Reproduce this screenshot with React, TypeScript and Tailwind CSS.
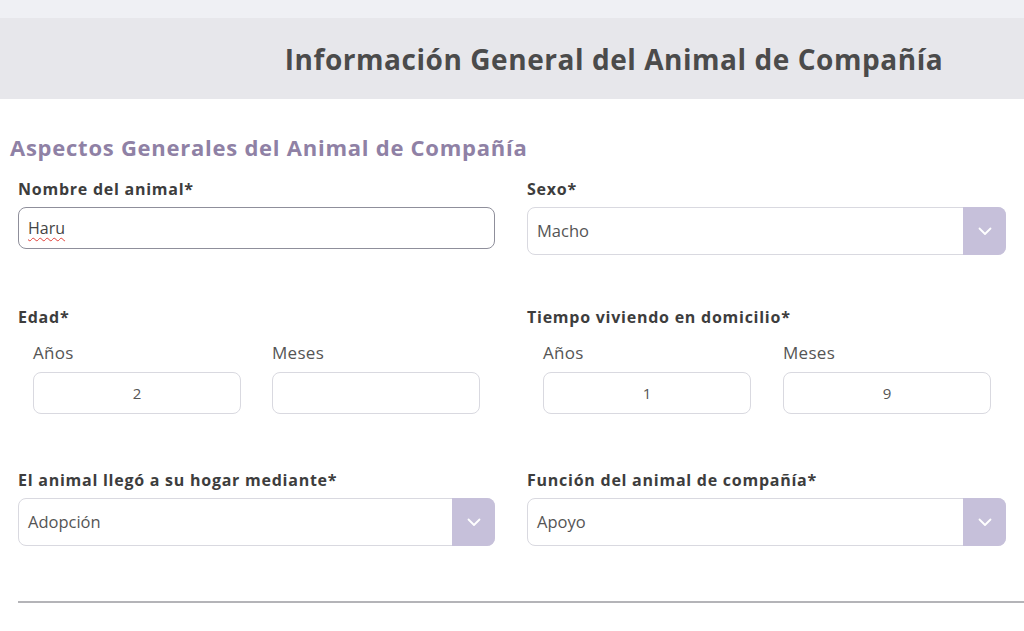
import React from "react";

const Chevron = () => (
  <svg width="14" height="9" viewBox="0 0 14 9" fill="none">
    <path d="M1.5 1.5L7 7L12.5 1.5" stroke="white" strokeWidth="1.8" strokeLinecap="round" strokeLinejoin="round" />
  </svg>
);

const Select = ({ value }: { value: string }) => (
  <div className="flex h-[48px] w-full rounded-[8px] border border-[#d9d9e0] bg-white">
    <div className="flex flex-1 items-center pl-[9px] text-[16.5px] text-[#555] font-['Open_Sans',sans-serif]">{value}</div>
    <div className="-my-px -mr-px flex w-[43px] items-center justify-center rounded-r-[8px] bg-[#c6c0da]">
      <Chevron />
    </div>
  </div>
);

const Label = ({ children }: { children: React.ReactNode }) => (
  <div className="h-[20px] leading-[20px] text-[16px] font-bold text-[#3d3d3d] font-['Open_Sans',sans-serif] tracking-[0.75px]">{children}</div>
);

const NumBox = ({ label, value }: { label: string; value: string }) => (
  <div className="flex w-[208px] flex-col">
    <div className="h-[20px] leading-[20px] text-[17px] text-[#555] font-['Open_Sans',sans-serif] tracking-[0.3px]">{label}</div>
    <div className="mt-[9px] flex h-[42px] items-center justify-center rounded-[8px] border border-[#d9d9e0] bg-white text-[15px] text-[#555] font-['Open_Sans',sans-serif]">
      {value}
    </div>
  </div>
);

export default function App() {
  return (
    <div className="h-[631px] w-[1024px] overflow-hidden bg-white">
      <div className="h-[18px] bg-[#eff0f4]" />
      <div className="flex h-[81px] items-center justify-center bg-[#e7e7eb] pl-[204px]">
        <h1 className="text-[28px] font-bold text-[#4b4b4b] font-['Open_Sans',sans-serif] tracking-[0.55px]">
          Información General del Animal de Compañía
        </h1>
      </div>
      <div className="px-[18px]">
        <h2 className="-ml-[8px] mt-[34px] h-[28px] leading-[28px] text-[22px] font-bold text-[#8f81a5] font-['Open_Sans',sans-serif] tracking-[0.75px]">
          Aspectos Generales del Animal de Compañía
        </h2>
        <div className="mt-[18px] grid grid-cols-[477px_479px] gap-x-[32px] items-start">
          <div className="flex flex-col">
            <Label>Nombre del animal*</Label>
            <div className="mt-[8px] flex h-[42px] items-center rounded-[8px] border border-[#8f8f9b] bg-white pl-[9px] text-[16px] text-[#444] font-['Open_Sans',sans-serif]">
              <span className="underline decoration-wavy decoration-[#e0403a] decoration-1 underline-offset-[3px]">Haru</span>
            </div>
          </div>
          <div className="flex flex-col">
            <Label>Sexo*</Label>
            <div className="mt-[8px]">
              <Select value="Macho" />
            </div>
          </div>

          <div className="mt-[52px] flex flex-col">
            <Label>Edad*</Label>
            <div className="mt-[16px] flex gap-[31px] pl-[15px]">
              <NumBox label="Años" value="2" />
              <NumBox label="Meses" value="" />
            </div>
          </div>
          <div className="mt-[52px] flex flex-col">
            <Label>Tiempo viviendo en domicilio*</Label>
            <div className="mt-[16px] flex gap-[32px] pl-[16px]">
              <NumBox label="Años" value="1" />
              <NumBox label="Meses" value="9" />
            </div>
          </div>

          <div className="mt-[56px] flex flex-col">
            <Label>El animal llegó a su hogar mediante*</Label>
            <div className="mt-[8px]">
              <Select value="Adopción" />
            </div>
          </div>
          <div className="mt-[56px] flex flex-col">
            <Label>Función del animal de compañía*</Label>
            <div className="mt-[8px]">
              <Select value="Apoyo" />
            </div>
          </div>
        </div>
      </div>
      <div className="ml-[18px] mt-[55px] h-[2px] bg-[#b4b4b8]" />
    </div>
  );
}
